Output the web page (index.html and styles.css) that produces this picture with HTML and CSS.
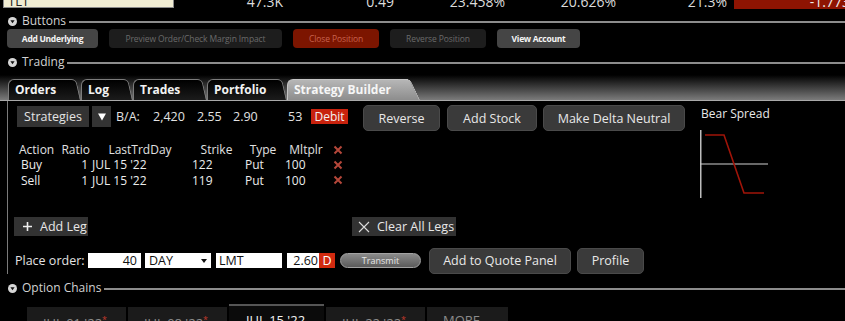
FILE: index.html
```html
<!DOCTYPE html>
<html lang="en">
<head>
    <meta charset="UTF-8">
    <title>Strategy Builder</title>
    <link rel="stylesheet" href="styles.css">
</head>
<body>
    <div class="quote-row">
        <div class="quote-sym">TLT</div>
        <div class="quote-cell">47.3K</div>
        <div class="quote-cell">0.49</div>
        <div class="quote-cell">23.458%</div>
        <div class="quote-cell">20.626%</div>
        <div class="quote-cell">21.3%</div>
        <div class="quote-cell quote-neg">-1.773</div>
    </div>

    <div class="section-head">
        <svg class="section-toggle" viewBox="0 0 9 9"><circle cx="4.5" cy="4.5" r="4.5" fill="#d6d6d6"/><polygon points="2.4,3.3 6.6,3.3 4.5,6.3" fill="#111"/></svg>
        <span class="section-title">Buttons</span>
        <div class="section-rule"></div>
    </div>

    <div class="action-bar">
        <div class="action-btn btn-underlying">Add Underlying</div>
        <div class="action-btn btn-preview is-disabled">Preview Order/Check Margin Impact</div>
        <div class="action-btn btn-close">Close Position</div>
        <div class="action-btn btn-reverse is-disabled">Reverse Position</div>
        <div class="action-btn btn-account">View Account</div>
    </div>

    <div class="section-head section-trading">
        <svg class="section-toggle" viewBox="0 0 9 9"><circle cx="4.5" cy="4.5" r="4.5" fill="#d6d6d6"/><polygon points="2.4,3.3 6.6,3.3 4.5,6.3" fill="#111"/></svg>
        <span class="section-title">Trading</span>
        <div class="section-rule"></div>
    </div>

    <div class="tabstrip">
        <div class="tab tab-orders">Orders</div>
        <div class="tab tab-log">Log</div>
        <div class="tab tab-trades">Trades</div>
        <div class="tab tab-portfolio">Portfolio</div>
        <div class="tab tab-builder active">Strategy Builder</div>
    </div>

    <div class="builder">
        <div class="builder-main">
            <div class="strategy-row">
                <div class="strategy-picker">
                    <div class="flat-btn picker-btn">Strategies</div>
                    <div class="flat-btn caret-btn">
                        <svg width="8" height="8" viewBox="0 0 8 8"><polygon points="0,0.5 8,0.5 4,7.5" fill="#fff"/></svg>
                    </div>
                    <span class="ba ba-label">B/A:</span>
                    <span class="ba ba-size">2,420</span>
                    <span class="ba ba-bid">2.55</span>
                    <span class="ba ba-ask">2.90</span>
                    <span class="ba ba-qty">53</span>
                    <span class="debit">Debit</span>
                </div>
                <div class="big-btn btn-reverse-legs">Reverse</div>
                <div class="big-btn btn-stock">Add Stock</div>
                <div class="big-btn btn-delta">Make Delta Neutral</div>
            </div>

            <div class="legs">
                <div class="leg-head">Action</div>
                <div class="leg-head num">Ratio</div>
                <div class="leg-head mid">LastTrdDay</div>
                <div class="leg-head mid">Strike</div>
                <div class="leg-head mid">Type</div>
                <div class="leg-head mid">Mltplr</div>
                <div class="leg-del"><svg viewBox="0 0 10 10"><path d="M1.5 1.5 L8.5 8.5 M8.5 1.5 L1.5 8.5"/></svg></div>

                <div class="leg-cell">Buy</div>
                <div class="leg-cell num">1</div>
                <div class="leg-cell">JUL 15 '22</div>
                <div class="leg-cell">122</div>
                <div class="leg-cell">Put</div>
                <div class="leg-cell">100</div>
                <div class="leg-del"><svg viewBox="0 0 10 10"><path d="M1.5 1.5 L8.5 8.5 M8.5 1.5 L1.5 8.5"/></svg></div>

                <div class="leg-cell">Sell</div>
                <div class="leg-cell num">1</div>
                <div class="leg-cell">JUL 15 '22</div>
                <div class="leg-cell">119</div>
                <div class="leg-cell">Put</div>
                <div class="leg-cell">100</div>
                <div class="leg-del"><svg viewBox="0 0 10 10"><path d="M1.5 1.5 L8.5 8.5 M8.5 1.5 L1.5 8.5"/></svg></div>
            </div>

            <div class="leg-actions">
                <div class="tool-btn btn-add-leg">
                    <svg width="9" height="9" viewBox="0 0 9 9"><path d="M4.5 0 V9 M0 4.5 H9" stroke="#eee" stroke-width="1.6"/></svg>
                    <span>Add Leg</span>
                </div>
                <div class="tool-btn btn-clear-legs">
                    <svg width="12" height="12" viewBox="0 0 12 12"><path d="M1 1 L11 11 M11 1 L1 11" stroke="#ddd" stroke-width="1.1"/></svg>
                    <span>Clear All Legs</span>
                </div>
            </div>

            <div class="order-row">
                <span class="order-label">Place order:</span>
                <div class="field field-qty">40</div>
                <div class="field field-tif">DAY
                    <svg width="6" height="4" viewBox="0 0 6 4"><polygon points="0,0 6,0 3,4" fill="#111"/></svg>
                </div>
                <div class="field field-type">LMT</div>
                <div class="field field-price">2.60</div>
                <div class="price-flag">D</div>
                <div class="transmit">Transmit</div>
                <div class="big-btn btn-quote-panel">Add to Quote Panel</div>
                <div class="big-btn btn-profile">Profile</div>
            </div>
        </div>

        <div class="payoff">
            <div class="payoff-title">Bear Spread</div>
            <svg class="payoff-chart" width="72" height="74" viewBox="0 0 72 74">
                <line x1="0.75" y1="3" x2="0.75" y2="71" stroke="#bdbdbd" stroke-width="1.5"/>
                <line x1="0" y1="37" x2="68" y2="37" stroke="#d0d0d0" stroke-width="1.2"/>
                <polyline points="5,8 24,8 44,66 64,66" fill="none" stroke="#a01408" stroke-width="1.6"/>
            </svg>
        </div>
    </div>

    <div class="section-head section-chains">
        <svg class="section-toggle" viewBox="0 0 9 9"><circle cx="4.5" cy="4.5" r="4.5" fill="#d6d6d6"/><polygon points="2.4,3.3 6.6,3.3 4.5,6.3" fill="#111"/></svg>
        <span class="section-title">Option Chains</span>
        <div class="section-rule"></div>
    </div>

    <div class="expiry-tabs">
        <div class="expiry">JUL 01 '22<sup>*</sup></div>
        <div class="expiry">JUL 08 '22<sup>*</sup></div>
        <div class="expiry current">JUL 15 '22</div>
        <div class="expiry">JUL 22 '22<sup>*</sup></div>
        <div class="expiry expiry-more">MORE...</div>
    </div>
</body>
</html>
```

FILE: styles.css
```css
* {
    box-sizing: border-box;
}
html, body {
    margin: 0;
    background: #000;
    overflow: hidden;
}
body {
    width: 845px;
    height: 321px;
    font-family: 'Open Sans', 'DejaVu Sans', sans-serif;
    font-size: 12px;
    color: #e2e2e2;
}

/* quote line, cut off by the top of the window */
.quote-row {
    display: flex;
    align-items: flex-end;
    height: 9px;
    overflow: hidden;
}
.quote-sym {
    flex-shrink: 0;
    width: 171px;
    height: 14px;
    margin: 0 0 1px 3px;
    padding-left: 4px;
    background: #f1edd3;
    border: 1px solid #8a8a8a;
    color: #222;
    font-size: 13px;
    line-height: 12px;
}
.quote-cell {
    flex-shrink: 0;
    width: 111px;
    height: 14px;
    padding-right: 2px;
    text-align: right;
    font-size: 14px;
    line-height: 14px;
    color: #dcdcdc;
}
.quote-neg {
    width: 116px;
    margin-left: 5px;
    padding-right: 0;
    background: #8e1402;
    color: #eee;
}

/* collapsible section headers */
.section-head {
    display: flex;
    align-items: center;
    height: 16px;
    margin-top: 4px;
    padding-left: 8px;
}
.section-trading {
    margin-top: 6px;
}
.section-chains {
    margin-top: 6px;
}
.section-toggle {
    width: 9px;
    height: 9px;
    margin-right: 5px;
}
.section-title {
    font-size: 12px;
    line-height: 16px;
    color: #d2d2d2;
}
.section-rule {
    flex: 1;
    height: 2px;
    margin: 2px 0 0 3px;
    background: #8c8c8c;
}

/* top button bar */
.action-bar {
    display: flex;
    gap: 11px;
    height: 19px;
    padding-left: 7px;
}
.action-btn {
    display: flex;
    align-items: center;
    justify-content: center;
    height: 19px;
    border-radius: 4px;
    background: #454545;
    color: #f4f4f4;
    font-size: 8.5px;
    font-weight: 700;
    letter-spacing: -0.3px;
}
.action-btn.is-disabled {
    background: #1d1d1d;
    color: #6a6a6a;
    font-weight: 400;
    letter-spacing: -0.1px;
}
.btn-underlying { width: 91px; }
.btn-preview { width: 173px; }
.btn-close {
    width: 86px;
    background: #7c1500;
    color: #c8624e;
    font-weight: 400;
    letter-spacing: -0.1px;
}
.btn-reverse { width: 96px; }
.btn-account { width: 83px; }

/* trading tabs */
.tabstrip {
    display: flex;
    align-items: flex-end;
    height: 26px;
    margin-top: 5px;
    padding-left: 8px;
    background: linear-gradient(#000, #7b7b7b);
    border-bottom: 1px solid #a9a9a9;
}
.tab {
    position: relative;
    z-index: 0;
    flex-shrink: 0;
    height: 21px;
    padding-left: 7px;
    font-size: 12px;
    font-weight: 700;
    line-height: 21px;
    color: #f2f2f2;
}
.tab::before,
.tab::after {
    content: '';
    position: absolute;
    z-index: -1;
    top: 0;
    bottom: 0;
    background: linear-gradient(#000, #1b1b1b);
    border-top: 1px solid #7c7c7c;
}
.tab::before {
    left: 0;
    right: 12px;
    border-left: 1px solid #7c7c7c;
    border-radius: 6px 0 0 0;
}
.tab::after {
    right: 0;
    width: 22px;
    border-right: 1px solid #7c7c7c;
    border-radius: 0 5px 0 0;
    transform-origin: bottom right;
    transform: skewX(13deg);
}
.tab.active::before,
.tab.active::after {
    background: linear-gradient(#b6b6b6, #8d8d8d);
    border-color: #c4c4c4;
}
.tab.active::after {
    transform: skewX(25deg);
}
.tab.active {
    color: #f6f6f6;
}
.tab-orders { width: 73px; }
.tab-log { width: 52px; }
.tab-trades { width: 74px; }
.tab-portfolio { width: 80px; }
.tab-builder { width: 133px; }

/* strategy builder panel */
.builder {
    display: flex;
    height: 173px;
    margin-left: 7px;
    border-left: 1px solid #7a7a7a;
}
.builder-main {
    flex: 1;
    padding: 4px 0 0 6px;
}
.strategy-row {
    display: flex;
    align-items: flex-start;
    height: 26px;
}
.strategy-picker {
    display: flex;
    align-items: center;
    height: 21px;
    margin: 1px 15px 0 3px;
}
.flat-btn {
    display: flex;
    align-items: center;
    justify-content: center;
    height: 21px;
    background: #333;
    color: #e4e4e4;
}
.picker-btn {
    width: 72px;
    font-size: 12.5px;
}
.caret-btn {
    width: 19px;
    margin-left: 3px;
}
.ba {
    font-size: 12.5px;
    color: #e2e2e2;
}
.ba-label { width: 37px; margin-left: 5px; }
.ba-size { width: 44px; }
.ba-bid { width: 36px; }
.ba-ask { width: 55px; }
.ba-qty { width: 23px; }
.debit {
    width: 37px;
    height: 15px;
    background: #c8220d;
    color: #f2f2f2;
    font-size: 12px;
    line-height: 15px;
    text-align: center;
}
.big-btn {
    display: flex;
    align-items: center;
    justify-content: center;
    height: 26px;
    border: 1px solid #4a4a4a;
    border-radius: 5px;
    background: #3a3a3a;
    color: #e8e8e8;
    font-size: 12.5px;
}
.btn-reverse-legs { width: 77px; }
.btn-stock { width: 90px; margin-left: 7px; }
.btn-delta { width: 142px; margin-left: 6px; }

/* legs table */
.legs {
    display: grid;
    grid-template-columns: 38px 33px 100px 53px 40px 46px 16px;
    grid-template-rows: 15px 15px 16px;
    align-items: center;
    margin: 11px 0 0 5px;
    font-size: 12px;
    line-height: 15px;
}
.leg-head {
    color: #e0e0e0;
}
.leg-head.mid {
    text-align: center;
}
.num {
    text-align: right;
}
.leg-cell {
    padding-left: 2px;
    color: #ececec;
}
.leg-cell.num {
    padding-right: 2px;
}
.leg-del {
    display: flex;
    align-items: center;
    padding-left: 4px;
}
.leg-del svg {
    width: 10px;
    height: 10px;
    stroke: #b5473a;
    stroke-width: 2;
}

/* add / clear legs */
.leg-actions {
    display: flex;
    gap: 264px;
    height: 19px;
    margin-top: 29px;
}
.tool-btn {
    display: flex;
    align-items: center;
    height: 19px;
    background: #323232;
    color: #e8e8e8;
    font-size: 12.5px;
}
.btn-add-leg {
    width: 74px;
    gap: 8px;
    padding-left: 9px;
}
.btn-clear-legs {
    width: 104px;
    gap: 7px;
    padding-left: 6px;
}

/* order entry */
.order-row {
    display: flex;
    align-items: center;
    height: 25px;
    margin-top: 12px;
}
.order-label {
    width: 74px;
    padding-left: 1px;
    font-size: 12.5px;
    color: #e2e2e2;
}
.field {
    display: flex;
    align-items: center;
    height: 15px;
    background: #fff;
    color: #111;
    font-size: 12.5px;
}
.field-qty {
    width: 53px;
    justify-content: flex-end;
    padding-right: 4px;
}
.field-tif {
    width: 66px;
    margin-left: 4px;
    padding: 0 4px;
    justify-content: space-between;
}
.field-type {
    width: 66px;
    margin-left: 5px;
    padding-left: 3px;
}
.field-price {
    width: 32px;
    margin-left: 5px;
    justify-content: flex-end;
    padding-right: 1px;
}
.price-flag {
    width: 16px;
    height: 15px;
    background: #d22a0f;
    color: #fff;
    font-size: 12.5px;
    line-height: 15px;
    text-align: center;
}
.transmit {
    width: 81px;
    height: 15px;
    margin-left: 5px;
    border: 1px solid #a2a2a2;
    border-radius: 8px;
    background: linear-gradient(#8a8a8a, #5b5b5b);
    color: #e6e6e6;
    font-size: 9px;
    line-height: 13px;
    text-align: center;
}
.btn-quote-panel { width: 142px; margin-left: 8px; }
.btn-profile { width: 67px; margin-left: 6px; }

/* payoff diagram */
.payoff {
    width: 145px;
    padding-top: 5px;
}
.payoff-title {
    margin-left: 1px;
    font-size: 12px;
    line-height: 16px;
    color: #e8e8e8;
}
.payoff-chart {
    display: block;
    margin-top: 5px;
}

/* option chain expiries */
.expiry-tabs {
    display: flex;
    align-items: flex-end;
    gap: 2px;
    height: 30px;
    margin-top: 6px;
    padding-left: 27px;
}
.expiry {
    flex-shrink: 0;
    width: 99px;
    height: 25px;
    padding: 5px 0 0 16px;
    background: #1b1b1b;
    color: #8b8b8b;
    font-size: 13px;
    line-height: 16px;
}
.expiry sup {
    color: #c0392b;
    font-size: 9px;
}
.expiry.current {
    width: 95px;
    height: 28px;
    padding: 6px 0 0 17px;
    background: #0b0b0b;
    border-top: 2px solid #555;
    color: #f0f0f0;
}
.expiry-more {
    width: 81px;
}
```
